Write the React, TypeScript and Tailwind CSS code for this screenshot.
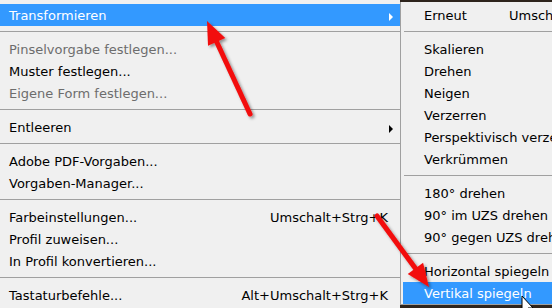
import React from 'react'

type Entry =
  | { kind: 'item'; label: string; shortcut?: string; disabled?: boolean; submenu?: boolean; active?: boolean }
  | { kind: 'sep' }

const mainMenu: Entry[] = [
  { kind: 'item', label: 'Transformieren', submenu: true, active: true },
  { kind: 'sep' },
  { kind: 'item', label: 'Pinselvorgabe festlegen...', disabled: true },
  { kind: 'item', label: 'Muster festlegen...' },
  { kind: 'item', label: 'Eigene Form festlegen...', disabled: true },
  { kind: 'sep' },
  { kind: 'item', label: 'Entleeren', submenu: true },
  { kind: 'sep' },
  { kind: 'item', label: 'Adobe PDF-Vorgaben...' },
  { kind: 'item', label: 'Vorgaben-Manager...' },
  { kind: 'sep' },
  { kind: 'item', label: 'Farbeinstellungen...', shortcut: 'Umschalt+Strg+K' },
  { kind: 'item', label: 'Profil zuweisen...' },
  { kind: 'item', label: 'In Profil konvertieren...' },
  { kind: 'sep' },
  { kind: 'item', label: 'Tastaturbefehle...', shortcut: 'Alt+Umschalt+Strg+K' },
]

const subMenu: Entry[] = [
  { kind: 'item', label: 'Erneut', shortcut: 'Umschalt+Strg+T' },
  { kind: 'sep' },
  { kind: 'item', label: 'Skalieren' },
  { kind: 'item', label: 'Drehen' },
  { kind: 'item', label: 'Neigen' },
  { kind: 'item', label: 'Verzerren' },
  { kind: 'item', label: 'Perspektivisch verzerren' },
  { kind: 'item', label: 'Verkrümmen' },
  { kind: 'sep' },
  { kind: 'item', label: '180° drehen' },
  { kind: 'item', label: '90° im UZS drehen' },
  { kind: 'item', label: '90° gegen UZS drehen' },
  { kind: 'sep' },
  { kind: 'item', label: 'Horizontal spiegeln' },
  { kind: 'item', label: 'Vertikal spiegeln', active: true },
]

function SubArrow({ white }: { white?: boolean }) {
  return (
    <svg width="5" height="8" viewBox="0 0 5 8" className="absolute right-[6px] top-[9px]">
      <path d="M0 0 L4 4 L0 8 Z" fill={white ? '#ffffff' : '#000000'} />
    </svg>
  )
}

function MainRow({ e }: { e: Entry }) {
  if (e.kind === 'sep') {
    return (
      <div className="h-[12px] pt-[5px]">
        <div className="h-px bg-[#a0a0a0]" />
      </div>
    )
  }
  const color = e.active ? 'bg-[#3399ff] text-white' : e.disabled ? 'text-[#6d6d6d]' : 'text-black'
  return (
    <div className={`relative flex h-[22px] items-center justify-between pl-[9px] pr-[12px] pt-[1px] leading-[21px] ${color}`}>
      <span>{e.label}</span>
      {e.shortcut && <span>{e.shortcut}</span>}
      {e.submenu && <SubArrow white={e.active} />}
    </div>
  )
}

function SubRow({ e }: { e: Entry }) {
  if (e.kind === 'sep') {
    return (
      <div className="h-[12px] pt-[5px] pl-[1px]">
        <div className="h-px bg-[#a0a0a0]" />
      </div>
    )
  }
  const color = e.active ? 'bg-[#3399ff] text-white' : 'text-black'
  return (
    <div className={`flex h-[22px] items-center whitespace-nowrap pl-[21px] pt-[1px] leading-[21px] ${color}`}>
      {e.shortcut ? (
        <>
          <span className="w-[85px]">{e.label}</span>
          <span>{e.shortcut}</span>
        </>
      ) : (
        <span>{e.label}</span>
      )}
    </div>
  )
}

function Arrow({ tail, tip }: { tail: [number, number]; tip: [number, number] }) {
  const dx = tip[0] - tail[0]
  const dy = tip[1] - tail[1]
  const len = Math.hypot(dx, dy)
  const ux = dx / len
  const uy = dy / len
  const nx = -uy
  const ny = ux
  const bx = tip[0] - ux * 23
  const by = tip[1] - uy * 23
  const head = `${tip[0]},${tip[1]} ${bx + nx * 9.5},${by + ny * 9.5} ${bx - nx * 9.5},${by - ny * 9.5}`
  return (
    <g filter="url(#shadow)">
      <line x1={tail[0]} y1={tail[1]} x2={bx + ux * 2} y2={by + uy * 2} stroke="#f20c0c" strokeWidth="5" strokeLinecap="round" />
      <polygon points={head} fill="#f20c0c" />
    </g>
  )
}

export default function App() {
  return (
    <div
      className="relative flex h-[308px] w-[552px] overflow-hidden bg-[#f0f0f0] text-[13px]"
      style={{ fontFamily: '"DejaVu Sans", Verdana, sans-serif' }}
    >
      {/* Edit menu */}
      <div className="flex w-[400px] shrink-0 flex-col pt-[4px]">
        {mainMenu.map((e, i) => (
          <MainRow key={i} e={e} />
        ))}
      </div>

      {/* Transformieren submenu */}
      <div className="flex flex-1 flex-col bg-[#2e241c]">
        <div className="mt-[2px] w-[260px] border-b border-l border-[#a0a0a0] bg-[#f0f0f0] pl-[2px] pt-[2px]">
          {subMenu.map((e, i) => (
            <SubRow key={i} e={e} />
          ))}
        </div>
      </div>

      {/* annotations */}
      <svg className="pointer-events-none absolute inset-0" width="552" height="308" viewBox="0 0 552 308">
        <defs>
          <filter id="shadow" x="-20%" y="-20%" width="140%" height="140%">
            <feDropShadow dx="2" dy="2" stdDeviation="1.5" floodColor="#000000" floodOpacity="0.4" />
          </filter>
        </defs>
        <Arrow tail={[250, 114]} tip={[207, 21]} />
        <Arrow tail={[377, 216]} tip={[429, 287]} />
        <path
          d="M522 296 L522 313 L526 309 L529 316 L531 315 L528 308 L533 308 Z"
          fill="#ffffff"
          stroke="#000000"
          strokeWidth="1"
          strokeLinejoin="round"
        />
      </svg>
    </div>
  )
}
